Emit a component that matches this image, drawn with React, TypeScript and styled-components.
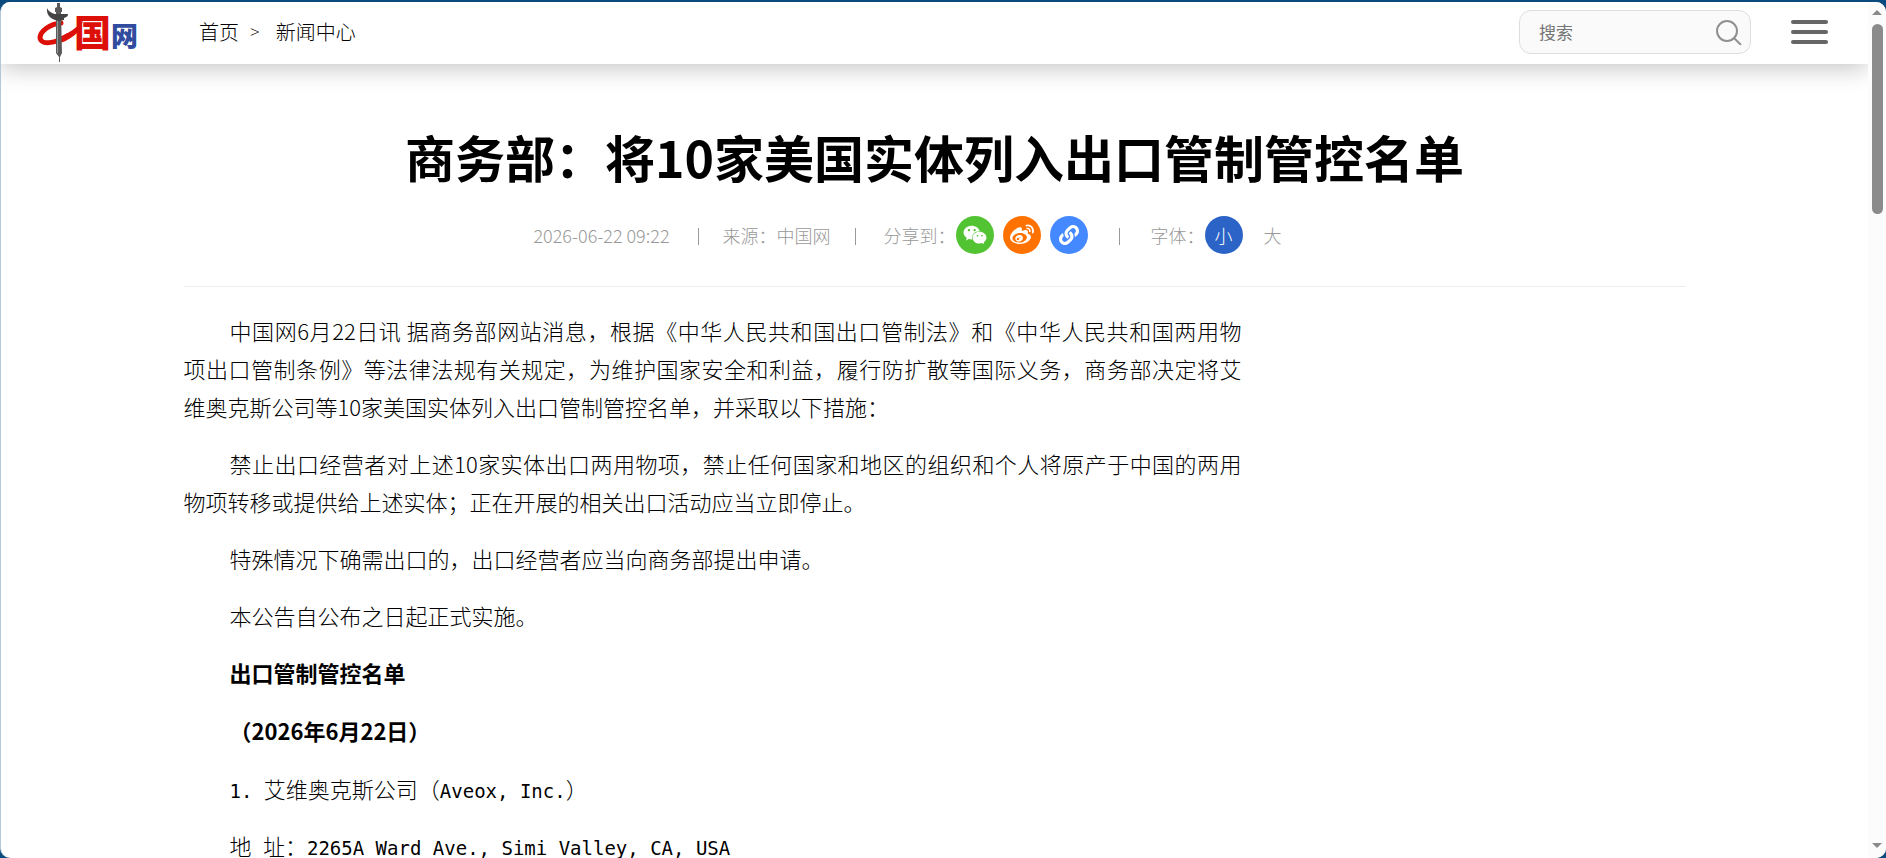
import React from "react";
import styled, { createGlobalStyle, css } from "styled-components";
import { FaWeixin, FaWeibo, FaLink } from "react-icons/fa";

const sans = `"Noto Sans CJK SC", sans-serif`;

const GlobalStyle = createGlobalStyle`
  * { box-sizing: border-box; }
  body { margin: 0; background: #0b4a7c; font-family: ${sans}; color: #000; }
`;

const Frame = styled.div`
  display: flex;
  height: calc(100vh - 2px);
  margin-top: 2px;
  border-left: 1px solid #b4c8d8;
  border-radius: 10px;
  background: #fff;
  overflow: hidden;
`;

const Page = styled.div`
  flex: 1;
  min-width: 0;
  overflow: hidden;
`;

const Header = styled.header`
  display: flex;
  align-items: center;
  height: 62px;
  padding: 0 40px 2px 35px;
  background: #fff;
  box-shadow: 0 4px 24px rgba(0, 0, 0, 0.24);
`;

const LogoLink = styled.a`
  display: block;
  height: 60px;
`;

const Crumbs = styled.nav`
  display: flex;
  flex: 1;
  gap: 11px;
  margin-left: 59px;
  font-size: 20px;
  font-weight: 300;
  line-height: 30px;
  a { color: inherit; text-decoration: none; }
`;

const Chevron = styled.span`
  margin-right: 5px;
  font-family: "Open Sans", sans-serif;
  font-size: 17px;
`;

const SearchBox = styled.form`
  display: flex;
  align-items: center;
  width: 232px;
  height: 44px;
  padding: 0 8px 0 19px;
  border: 1px solid #ddd;
  border-radius: 12px;
  background: #fafafa;
`;

const SearchInput = styled.input`
  flex: 1;
  min-width: 0;
  padding: 0 0 2px;
  border: 0;
  outline: 0;
  background: transparent;
  font: 17px ${sans};
  &::placeholder { color: #757575; opacity: 1; }
`;

const PlainButton = styled.button`
  display: flex;
  padding: 0;
  border: 0;
  background: none;
  cursor: pointer;
`;

const MenuButton = styled(PlainButton)`
  flex-direction: column;
  gap: 6px;
  margin-left: 40px;
`;

const MenuBar = styled.span`
  width: 37px;
  height: 4px;
  border-radius: 2px;
  background: #666;
`;

const Article = styled.article`
  max-width: 1502px;
  margin: 0 auto;
`;

const Title = styled.h1`
  margin: 54px 0 0;
  font-size: 50px;
  font-weight: 700;
  line-height: 76px;
  text-align: center;
`;

const Meta = styled.div`
  display: flex;
  align-items: center;
  justify-content: center;
  height: 93px;
  padding: 0 44px 10px 0;
  border-bottom: 1px solid #eee;
  color: #999;
  font-size: 18px;
  font-weight: 300;
`;

const Divider = styled.span<{ $before?: number; $after?: number }>`
  width: 1px;
  height: 17px;
  margin: 2px ${(p) => p.$after ?? 24}px 0 ${(p) => p.$before ?? 24}px;
  background: #999;
`;

const Group = styled.div<{ $gap: number }>`
  display: flex;
  align-items: center;
  gap: ${(p) => p.$gap}px;
`;

const Round = styled.button<{ $color?: string }>`
  display: flex;
  align-items: center;
  justify-content: center;
  width: 38px;
  height: 38px;
  padding: 0;
  border: 0;
  border-radius: 50%;
  background: ${(p) => p.$color ?? "transparent"};
  color: ${(p) => (p.$color ? "#fff" : "#999")};
  font: 300 18px ${sans};
  cursor: pointer;
`;

const Body = styled.div`
  max-width: 1058px;
  padding-top: 24px;
`;

const Para = styled.p<{ $bold?: boolean }>`
  margin: 0 0 19px;
  font-size: 22px;
  font-weight: 300;
  line-height: 38px;
  text-align: justify;
  text-indent: 46px;
  text-spacing-trim: space-all;
  ${(p) => p.$bold && css`margin-bottom: 20px; font-weight: 700;`}
`;

const Keep = styled.span`
  white-space: nowrap;
`;

const Entry = styled(Para)`
  display: flex;
  align-items: baseline;
  height: 38px;
  padding-left: 46px;
  text-indent: 0;
  white-space: pre;
`;

const Mono = styled.span`
  font-family: "DejaVu Sans Mono", monospace;
  font-size: 19px;
  font-weight: 400;
  line-height: 20px;
`;

const Scrollbar = styled.div`
  display: flex;
  flex-direction: column;
  align-items: center;
  width: 18px;
  padding: 8px 0 10px;
  background: #fcfcfc;
`;

const Arrow = styled.span<{ $down?: boolean }>`
  border: 5px solid transparent;
  ${(p) => (p.$down ? "border-top-color: #8b8b8b; border-bottom: 0;" : "border-bottom-color: #8b8b8b; border-top: 0;")}
`;

const Track = styled.div`
  flex: 1;
  margin: 9px 0;
`;

const Thumb = styled.div`
  width: 11px;
  height: 190px;
  border-radius: 6px;
  background: #8b8b8b;
`;

function Logo() {
  return (
    <svg width="104" height="60" viewBox="35 2 104 60" role="img" aria-label="中国网">
      <path d="M60 23C49 24 39 31 39 38C40 45 54 44 66 36" fill="none" stroke="#dc1008" strokeWidth="5" strokeLinecap="round" />
      <path d="M59 37C68 33 75 28 82 21L78 31C72 37 66 41 59 43Z" fill="#dc1008" />
      <path d="M56 3h3v4l2 1v4h-1l1 41-2 4v5h-1v-5l-3-4 0-41h-1V8l2-1z" fill="#5a5a5a" />
      <path d="M56 18h1v35h-1z" fill="#999" />
      <path d="M46 8c2 4 6 6 10 6l11 0c0 3-2 3-4 4v2l-5 1c-6-1-13-4-12-13z" fill="#444" />
      <text x="73" y="47" fontSize="37" fontWeight="900" fontFamily="Noto Sans CJK SC" fill="#dc1008">国</text>
      <text x="110" y="46" fontSize="27" fontWeight="900" fontFamily="Noto Sans CJK SC" fill="#314b9f">网</text>
    </svg>
  );
}

export default function App() {
  return (
    <Frame>
      <GlobalStyle />
      <Page>
        <Header>
          <LogoLink href="#"><Logo /></LogoLink>
          <Crumbs aria-label="当前位置">
            <a href="#">首页</a>
            <Chevron>&gt;</Chevron>
            <a href="#">新闻中心</a>
          </Crumbs>
          <SearchBox role="search">
            <SearchInput type="text" placeholder="搜索" aria-label="搜索" />
            <PlainButton type="button" aria-label="搜索">
              <svg width="26" height="26" viewBox="0 0 26 26" fill="none" stroke="#909090" strokeWidth="2">
                <circle cx="11" cy="12" r="10" />
                <path d="M18 19l7 7" />
              </svg>
            </PlainButton>
          </SearchBox>
          <MenuButton type="button" aria-label="菜单">
            <MenuBar /><MenuBar /><MenuBar />
          </MenuButton>
        </Header>
        <Article>
          <Title>商务部：将10家美国实体列入出口管制管控名单</Title>
          <Meta>
            <time>2026-06-22 09:22</time>
            <Divider $before={28} />
            <span>来源：中国网</span>
            <Divider $after={28} />
            <span>分享到：</span>
            <Group $gap={9}>
              <Round $color="#52c332" aria-label="微信"><FaWeixin size={24} /></Round>
              <Round $color="#ff7200" aria-label="微博"><FaWeibo size={24} /></Round>
              <Round $color="#4489ff" aria-label="复制链接"><FaLink size={20} /></Round>
            </Group>
            <Divider $before={31} $after={31} />
            <span>字体：</span>
            <Group $gap={11}>
              <Round $color="#2b63c6">小</Round>
              <Round>大</Round>
            </Group>
          </Meta>
          <Body>
            <Para>中国网6月22日讯 据商务部网站消息，根据《中华人民共和国出口管制法》和《中华人民共和国两用物<Keep>项出口</Keep>管制条例》等法律法规有关规定，为维护国家安全和利益，履行防扩散等国际义务，商务部决定将艾<Keep>维奥克斯</Keep>公司等10家美国实体列入出口管制管控名单，并采取以下措施：</Para>
            <Para>禁止出口经营者对上述10家实体出口两用物项，禁止任何国家和地区的组织和个人将原产于中国的两用<Keep>物项</Keep>转移或提供给上述实体；正在开展的相关出口活动应当立即停止。</Para>
            <Para>特殊情况下确需出口的，出口经营者应当向商务部提出申请。</Para>
            <Para>本公告自公布之日起正式实施。</Para>
            <Para $bold>出口管制管控名单</Para>
            <Para $bold>（2026年6月22日）</Para>
            <Entry><Mono>1. </Mono>艾维奥克斯公司（<Mono>Aveox, Inc.</Mono>）</Entry>
            <Entry>地<Mono> </Mono>址：<Mono>2265A Ward Ave., Simi Valley, CA, USA</Mono></Entry>
          </Body>
        </Article>
      </Page>
      <Scrollbar aria-hidden="true">
        <Arrow />
        <Track><Thumb /></Track>
        <Arrow $down />
      </Scrollbar>
    </Frame>
  );
}
